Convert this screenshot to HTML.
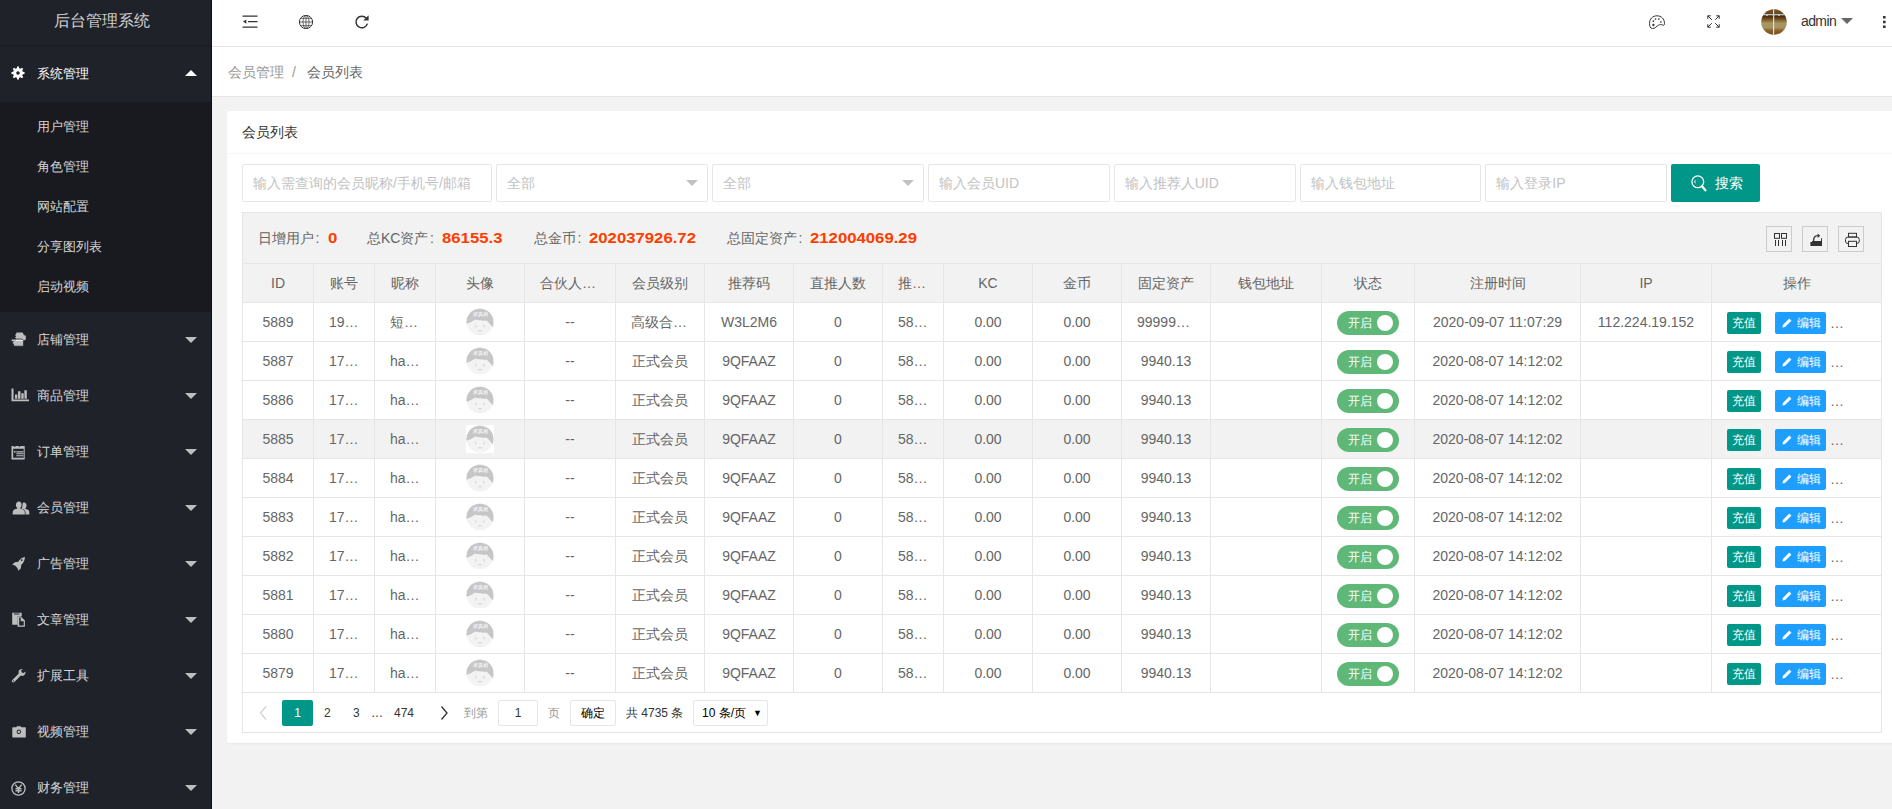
<!DOCTYPE html>
<html><head><meta charset="utf-8">
<style>
*{box-sizing:border-box;margin:0;padding:0}
html,body{width:1892px;height:809px;overflow:hidden;background:#f2f2f2;font-family:"Liberation Sans",sans-serif;font-size:14px;color:#666;font-weight:500}
.side{position:absolute;left:0;top:0;width:212px;height:809px;background:#20222a;overflow:hidden}
.side:after{content:"";position:absolute;right:0;top:0;width:1px;height:809px;background:#0f1014}
.logo{position:absolute;left:0;top:0;width:211px;height:45px;line-height:42px;font-size:16px;color:rgba(255,255,255,.8);text-align:center;padding-right:8px;box-shadow:0 1px 1px rgba(0,0,0,.2)}
.mi{position:absolute;left:0;width:211px;height:56px;line-height:56px;color:rgba(255,255,255,.82);font-size:13px}
.mi .t{position:absolute;left:37px;top:0}
.mi svg{position:absolute}
.mi .car{position:absolute;left:185px;top:25px;width:0;height:0;border-left:6px solid transparent;border-right:6px solid transparent;border-top:6px solid rgba(255,255,255,.7)}
.mi.open{color:#fff}
.mi.open .car{border-top:0;border-bottom:6px solid #fff;top:24px}
.sub{position:absolute;left:0;top:102px;width:211px;height:210px;background:#191a1f}
.sub div{position:absolute;left:37px;height:40px;line-height:40px;color:rgba(255,255,255,.82);font-size:13px}

.hdr{position:absolute;left:212px;top:0;width:1680px;height:47px;background:#fff;border-bottom:1px solid #e6e6e6}
.hdr svg{position:absolute}
.bc{position:absolute;left:212px;top:47px;width:1680px;height:50px;background:#fff;border-bottom:1px solid #e6e6e6;font-size:14px;line-height:50px}
.bc .a{position:absolute;left:16px;top:0;color:#999}
.bc .s{position:absolute;left:80px;top:0;color:#999}
.bc .c{position:absolute;left:95px;top:0;color:#666}
.card{position:absolute;left:227px;top:111px;width:1680px;height:632px;background:#fff;border-radius:2px;box-shadow:0 1px 2px 0 rgba(0,0,0,.05)}
.ch{position:absolute;left:0;top:0;width:100%;height:43px;border-bottom:1px solid #f6f6f6;line-height:42px;padding-left:15px;color:#333;font-size:14px}
.inp{position:absolute;top:53px;height:38px;border:1px solid #e6e6e6;border-radius:2px;background:#fff;line-height:36px;padding-left:10px;color:#c2c2c2;font-size:14px;white-space:nowrap;overflow:hidden}
.inp .arr{position:absolute;right:9px;top:15px;width:0;height:0;border-left:6px solid transparent;border-right:6px solid transparent;border-top:6px solid #c2c2c2}
.btn{position:absolute;top:53px;left:1444px;width:89px;height:38px;background:#009688;border-radius:2px;color:#fff;line-height:38px;font-size:14px}
.tv{position:absolute;left:15px;top:101px;width:1640px;height:521px;border:1px solid #e6e6e6;background:#fff}
.tool{position:absolute;left:0;top:0;width:1638px;height:51px;border-bottom:1px solid #e6e6e6;background:#f2f2f2;line-height:50px;padding-left:15px;color:#666;font-size:14px;white-space:nowrap}
.tool b{color:#ff3c00;font-weight:bold;font-size:15px}
.ti{position:absolute;top:13px;width:26px;height:26px;border:1px solid #ccc;background:#f2f2f2}
.ti svg{position:absolute;left:5px;top:5px}
.row{position:absolute;left:0;width:1638px;height:39px;border-bottom:1px solid #e6e6e6;display:flex;background:#fff}
.row.th{background:#f2f2f2}
.row.hov{background:#f2f2f2}
.row>div{height:38px;border-right:1px solid #e6e6e6;text-align:center;line-height:38px;color:#666;font-size:14px;white-space:nowrap;overflow:hidden;position:relative}
.row>div:last-child{border-right:0}
.sw{display:inline-block;position:relative;width:62px;height:24px;border-radius:12px;background:#5fb878;vertical-align:middle;margin-top:-1px;color:#fff;font-size:12px;line-height:24px;text-align:left;padding-left:11px}
.sw:after{content:"";position:absolute;left:40px;top:4px;width:16px;height:16px;border-radius:50%;background:#fff}
.av{display:inline-block;width:28px;height:28px;vertical-align:middle;margin-top:-3px}
.ops{position:absolute;left:15px;top:9px;height:22px;white-space:nowrap}
.bx{position:absolute;top:0;height:22px;line-height:22px;border-radius:2px;color:#fff;font-size:12px;text-align:center}
.pg{position:absolute;left:0;top:480px;width:1638px;height:39px;font-size:12px;color:#333}
.pg>*{position:absolute}
.tool .lab{position:absolute;top:0;line-height:50px;color:#666}
.tool b{position:absolute;top:0;line-height:50px;color:#ff3d00;font-weight:bold;font-size:15px;display:inline-block;transform:scaleX(1.115);transform-origin:0 50%}


.col{display:inline-block;width:14px;padding-left:1.5px;font-style:normal}

</style></head><body>
<svg width="0" height="0" style="position:absolute"><defs><symbol id="avatar" viewBox="0 0 28 28"><rect width="28" height="28" fill="#fff"/><circle cx="14" cy="14" r="13.5" fill="#f3f3f3"/><path fill="#c6c6c6" d="M.55 15.8A13.5 13.5 0 1 1 27.45 14.2c.1 1.7-.1 3.4-.5 4.8-2-1.8-4-4.3-6.2-6.6-2.3.5-4.5.3-6.6-.2-2 .3-3.6-.2-5.2-.6C6 13.6 3.4 15.2.55 15.8z"/><text x="14" y="7.6" font-size="5.4" font-weight="bold" fill="#f7f7f7" fill-opacity=".85" text-anchor="middle" font-family="Liberation Sans">求真相</text><path fill="#f0f0f0" d="M8 13.2l1.5-1.4 1.5 1.4h-1v1.3h-1v-1.3z"/><path fill="#d8d8d8" d="M9.2 16.8h1.2v2.6H9.2z M17.4 16.8h1.2v2.6h-1.2z M11.6 22.3h4.8c-.4.9-1.2 1.3-2.4 1.3s-2-.4-2.4-1.3z"/></symbol></defs></svg><div class="side">
<div class="logo">后台管理系统</div>
<div class="mi open" style="top:46px"><svg style="left:11px;top:20px" width="14" height="14" viewBox="0 0 14 14"><path fill="#fff" fill-rule="evenodd" d="M11.76 5.86 L13.54 6.12 L13.54 7.88 L11.76 8.14 L11.18 9.56 L12.25 11.00 L11.00 12.25 L9.56 11.18 L8.14 11.76 L7.88 13.54 L6.12 13.54 L5.86 11.76 L4.44 11.18 L3.00 12.25 L1.75 11.00 L2.82 9.56 L2.24 8.14 L0.46 7.88 L0.46 6.12 L2.24 5.86 L2.82 4.44 L1.75 3.00 L3.00 1.75 L4.44 2.82 L5.86 2.24 L6.12 0.46 L7.88 0.46 L8.14 2.24 L9.56 2.82 L11.00 1.75 L12.25 3.00 L11.18 4.44Z M7 5.2a1.8 1.8 0 1 0 0 3.6a1.8 1.8 0 1 0 0-3.6z"/></svg><span class="t">系统管理</span><span class="car"></span></div>
<div class="sub">
<div style="top:5px">用户管理</div>
<div style="top:45px">角色管理</div>
<div style="top:85px">网站配置</div>
<div style="top:125px">分享图列表</div>
<div style="top:165px">启动视频</div>
</div>
<div class="mi" style="top:312px"><svg style="left:11px;top:20px" width="16" height="15" viewBox="0 0 16 15"><path fill="rgba(255,255,255,.7)" d="M6 0.5H10.5C11.5 0.5 12 1 12.3 1.8L13 3.5C13.8 3 14.8 3.4 14.8 4.4V7.5L12 9H6C5.3 9 4.8 8.5 4.8 7.9C4.8 7.4 5.1 7 5.5 6.9C4.7 6.8 4.2 6.3 4.2 5.6C4.2 5 4.6 4.5 5.2 4.4C4.6 4.2 4.3 3.7 4.3 3.1C4.3 2.5 4.8 2 5.4 2C5.2 1.8 5.1 1.5 5.1 1.3C5.1 .8 5.5 .5 6 .5Z"/><path fill="rgba(255,255,255,.7)" stroke="#20222a" stroke-width=".8" d="M1.3 7.1H9.8C11 7.1 12.6 7.8 12.6 9.4V14.2H3.8C3 14.2 2.4 13.7 2.4 13C2.4 12.6 2.6 12.3 2.9 12.1C2 12 1.4 11.5 1.4 10.8C1.4 10.2 1.8 9.7 2.4 9.6H1.3C.7 9.6 .1 9.1 .1 8.4C.1 7.7 .7 7.1 1.3 7.1Z"/></svg><span class="t">店铺管理</span><span class="car"></span></div>
<div class="mi" style="top:368px"><svg style="left:11px;top:20px" width="18" height="14" viewBox="0 0 18 14"><path fill="rgba(255,255,255,.7)" d="M0.5 0.5h2v11h15.5v1.8H0.5z M4 6.5h2.3v4.3H4z M7 3.3h2.5v7.5H7z M10.3 5.3h2.4v5.5h-2.4z M13.3 2.3h2.5v8.5h-2.3z"/></svg><span class="t">商品管理</span><span class="car"></span></div>
<div class="mi" style="top:424px"><svg style="left:11px;top:21px" width="15" height="15" viewBox="0 0 15 15"><path fill="rgba(255,255,255,.7)" fill-rule="evenodd" d="M0.5 1h2l1 .9 1.5-.9h2.5l1 .9 1.2-.9h4v13.5H0.5z M2.2 3.8v9h10.5v-9z M3 6h1.6v1.6H3z M5.3 6.2h7v1.2h-7z M5.3 8.2h7v1h-7z M5.3 10.2h7v1h-7z"/></svg><span class="t">订单管理</span><span class="car"></span></div>
<div class="mi" style="top:480px"><svg style="left:12px;top:21px" width="18" height="14" viewBox="0 0 18 14"><path fill="rgba(255,255,255,.7)" d="M7 .5c1.6 0 2.6 1.4 2.6 3.2 0 1.5-.6 2.8-1.5 3.3v.6c2.8.6 4.4 1.6 4.6 2.8l.2 3.1H.6l.2-3.1C1 9.2 2.6 8.2 5.4 7.6V7C4.5 6.5 3.9 5.2 3.9 3.7 3.9 1.9 5.3.5 7 .5z M12 1.5c1.5 0 2.5 1.3 2.5 2.9 0 1.3-.5 2.5-1.3 2.9v.5c2.4.5 3.8 1.4 4 2.5l.2 3.2h-3.8l-.2-2.8c-.2-1.5-1.6-2.6-3.9-3.3.7-.8 1-1.9 1-3.1.1-1.2 0-2 .5-2.5.3-.2.6-.3 1-.3z"/></svg><span class="t">会员管理</span><span class="car"></span></div>
<div class="mi" style="top:536px"><svg style="left:11px;top:20px" width="15" height="15" viewBox="0 0 15 15"><path fill="rgba(255,255,255,.7)" fill-rule="evenodd" d="M14 1c-.2 3.2-1.3 5.8-3.7 7.8l-.4 3.4-2.6 2.6-.9-2.8-2.4-2.4L1.2 8.7l2.6-2.5 3.4-.4C9 3.4 11 1.3 14 1z M10.8 3.2a.9.9 0 1 0 0 1.8.9.9 0 0 0 0-1.8z"/></svg><span class="t">广告管理</span><span class="car"></span></div>
<div class="mi" style="top:592px"><svg style="left:11px;top:20px" width="16" height="16" viewBox="0 0 16 16"><path fill="rgba(255,255,255,.7)" fill-rule="evenodd" d="M1.2 .8h9.5v3.5l-2.4 0-1.9 0v8.4H1.2z M3 1.5h5.5v.9H3z M6.6 4.4h3.2l4.1 4.1v6.3H6.6z M8.2 5.6v7.8h4.5V9.2h-3V5.6z"/></svg><span class="t">文章管理</span><span class="car"></span></div>
<div class="mi" style="top:648px"><svg style="left:11px;top:20px" width="15" height="15" viewBox="0 0 15 15"><path fill="rgba(255,255,255,.7)" fill-rule="evenodd" d="M11.8 1c-1.5-.4-3.3.3-4 1.8-.4.9-.4 1.9 0 2.8L1.3 11.9c-.6.6-.6 1.5 0 2.1s1.5.6 2.1 0L9.8 7.6c.9.4 2 .4 2.9-.1 1.4-.7 2.1-2.3 1.8-3.9l-1.8 1.5-2-.6-.5-2z M2.5 12.2a.6.6 0 1 0 0 1.2.6.6 0 0 0 0-1.2z"/></svg><span class="t">扩展工具</span><span class="car"></span></div>
<div class="mi" style="top:704px"><svg style="left:12px;top:22px" width="14" height="12" viewBox="0 0 14 12"><path fill="rgba(255,255,255,.7)" fill-rule="evenodd" d="M4.2 1.2l.7-.9h3.8l.7.9h3.8c.3 0 .6.3.6.6v9.1c0 .3-.3.6-.6.6H.9c-.3 0-.6-.3-.6-.6V1.8c0-.3.3-.6.6-.6z M6.8 3.6a2.2 2.2 0 1 0 0 4.4 2.2 2.2 0 0 0 0-4.4z M6.8 4.5a1.3 1.3 0 1 1 0 2.6 1.3 1.3 0 0 1 0-2.6z"/></svg><span class="t">视频管理</span><span class="car"></span></div>
<div class="mi" style="top:760px"><svg style="left:11px;top:21px" width="15" height="15" viewBox="0 0 15 15"><circle cx="7.5" cy="7.5" r="6.6" fill="none" stroke="rgba(255,255,255,.7)" stroke-width="1.3"/><path fill="none" stroke="rgba(255,255,255,.7)" stroke-width="1.4" d="M4.3 3.6l3.2 4 3.2-4 M7.5 7.6v4.3 M4.5 7.8h6 M4.5 9.8h6"/></svg><span class="t">财务管理</span><span class="car"></span></div>
</div><div class="hdr">
<svg style="left:30px;top:14px" width="16" height="15" viewBox="0 0 16 15"><path fill="#333" d="M0.5 1.5h15v1.2H0.5z M6 7h9.5v1.2H6z M0.5 12.6h15v1.2H0.5z M1 7.6l3.3-2.2v4.4z"/></svg>
<svg style="left:86px;top:14px" width="16" height="16" viewBox="0 0 16 16"><g fill="none" stroke="#333" stroke-width="1"><circle cx="8" cy="8" r="6.6"/></g><g fill="none" stroke="#444" stroke-width=".8"><ellipse cx="8" cy="8" rx="3" ry="6.6"/><path d="M8 1.4v13.2 M3 4.3h10 M1.8 8h12.4 M3 11.7h10"/></g></svg>
<svg style="left:142px;top:14px" width="16" height="16" viewBox="0 0 16 16"><path fill="none" stroke="#333" stroke-width="1.5" d="M13.4 9.6A5.8 5.8 0 1 1 12.3 4.3"/><path fill="#333" d="M14.6 1.2v5.4H9.2z"/></svg>
<svg style="left:1437px;top:15px" width="16" height="14" viewBox="0 0 16 14"><path fill="none" stroke="#333" stroke-width="1" d="M3.5 13.5C1.2 13.5.5 11 .5 8.5.5 4 3.5.8 8 .8s7.5 3.2 7.5 7.7c0 1.5-.7 2-1.7 1.6-1.3-.6-2.8-.7-4.3 0-2 1-3 3.4-6 3.4z"/><g fill="#333"><circle cx="6.5" cy="4" r=".85"/><circle cx="9.8" cy="4" r=".85"/><circle cx="4.4" cy="6.2" r=".85"/><circle cx="11.9" cy="7" r=".85"/><circle cx="4.4" cy="10" r="1.15"/></g></svg>
<svg style="left:1495px;top:15px" width="13" height="13" viewBox="0 0 13 13"><g fill="none" stroke="#333" stroke-width="1"><path d="M.8.8l4 4 M.8 3.8V.8h3 M12.2.8l-4 4 M9.2.8h3v3 M.8 12.2l4-4 M.8 9.2v3h3 M12.2 12.2l-4-4 M12.2 9.2v3h-3"/></g></svg>
<svg style="left:1549px;top:9px" width="26" height="26" viewBox="0 0 26 26"><defs><linearGradient id="ag" x1="0" y1="0" x2="0" y2="1"><stop offset="0" stop-color="#7a5428"/><stop offset=".2" stop-color="#6a4518"/><stop offset=".26" stop-color="#3e2208"/><stop offset=".4" stop-color="#7a5424"/><stop offset=".55" stop-color="#a8975f"/><stop offset=".72" stop-color="#a49462"/><stop offset=".82" stop-color="#8c6228"/><stop offset="1" stop-color="#7a4a14"/></linearGradient><clipPath id="ac"><circle cx="13" cy="13" r="12.8"/></clipPath></defs><g clip-path="url(#ac)"><rect width="26" height="26" fill="url(#ag)"/><path d="M12.6 0v26 M0 5.8h26" stroke="#dde8ee" stroke-width="1.1"/><g fill="#a8d4e6"><circle cx="12.6" cy="5.8" r="1.1"/><circle cx="6" cy="6.2" r=".9"/><circle cx="18" cy="6.2" r=".9"/><circle cx="12.6" cy="10.5" r=".8"/><circle cx="12.6" cy="16" r=".8"/><circle cx="12.6" cy="21" r=".8"/></g></g></svg>
<span style="position:absolute;left:1589px;top:0;line-height:42px;color:#333;font-size:14px;letter-spacing:-.6px">admin</span>
<span style="position:absolute;left:1629px;top:18px;width:0;height:0;border-left:6px solid transparent;border-right:6px solid transparent;border-top:6px solid #666"></span>
<svg style="left:1670px;top:15px" width="5" height="14" viewBox="0 0 5 14"><path fill="#333" d="M1 1h2.6v2.6H1z M1 5.7h2.6v2.6H1z M1 10.4h2.6V13H1z"/></svg>
</div><div class="bc"><span class="a">会员管理</span><span class="s">/</span><span class="c">会员列表</span></div><div class="card">
<div class="ch">会员列表</div>
<div class="inp" style="left:15px;width:250px">输入需查询的会员昵称/手机号/邮箱</div>
<div class="inp" style="left:269px;width:212px">全部<span class=arr></span></div>
<div class="inp" style="left:485px;width:212px">全部<span class=arr></span></div>
<div class="inp" style="left:701.0px;width:181.75px">输入会员UID</div>
<div class="inp" style="left:886.75px;width:181.75px">输入推荐人UID</div>
<div class="inp" style="left:1072.5px;width:181.75px">输入钱包地址</div>
<div class="inp" style="left:1258.25px;width:181.75px">输入登录IP</div>
<div class="btn"><svg style="position:absolute;left:20px;top:11px" width="16" height="17" viewBox="0 0 16 17"><circle cx="6.8" cy="6.8" r="5.9" fill="none" stroke="#fff" stroke-width="1.3"/><path d="M4.2 5.2a3.2 3.2 0 0 0 .1 3" fill="none" stroke="#fff" stroke-width="1"/><path d="M10.8 11l3.6 4.3" stroke="#fff" stroke-width="2.2" stroke-linecap="round"/></svg><span style="position:absolute;left:44px;top:0">搜索</span></div>
<div class="tv">
<div class="tool">
<span class="lab" style="left:15px">日增用户<i class=col>:</i></span><b style="left:85px">0</b>
<span class="lab" style="left:124px">总KC资产<i class=col>:</i></span><b style="left:199px">86155.3</b>
<span class="lab" style="left:291px">总金币<i class=col>:</i></span><b style="left:346px">202037926.72</b>
<span class="lab" style="left:484px">总固定资产<i class=col>:</i></span><b style="left:567px">212004069.29</b>
<div class="ti" style="left:1523px"><svg width="16" height="16" viewBox="0 0 16 16"><g fill="none" stroke="#333" stroke-width="1"><rect x="2.5" y="1.5" width="5" height="4.8"/><rect x="9.5" y="1.5" width="5" height="4.8"/><path d="M3.5 8v6 M6.5 8v6 M10.5 8v6 M13.5 8v6"/></g></svg></div>
<div class="ti" style="left:1559px"><svg width="16" height="16" viewBox="0 0 16 16"><path fill="#333" d="M2.3 10h11.7v4H2.5z"/><path fill="none" stroke="#333" stroke-width="1" d="M13.5 6.3V10 M4 9.5h9"/><path fill="none" stroke="#333" stroke-width="1.3" d="M5.6 9.2C5.4 6 6.6 3.6 9.8 3.6"/><path fill="#333" d="M9.6 1.4l2.6 2.3-2.6 2.2z"/></svg></div>
<div class="ti" style="left:1595px"><svg width="16" height="16" viewBox="0 0 16 16"><g fill="none" stroke="#333" stroke-width="1"><rect x="4.5" y="1.3" width="8" height="3.8"/><rect x="1.5" y="5" width="13.8" height="6.6" rx="2.6"/><rect x="4.5" y="9.3" width="8" height="5.2" fill="#f2f2f2"/></g></svg></div>
</div>
<div class="row th" style="top:51px"><div style="width:71px">ID</div><div style="width:61px">账号</div><div style="width:61px">昵称</div><div style="width:89px">头像</div><div style="width:91px;text-align:left;padding-left:15px">合伙人…</div><div style="width:89px">会员级别</div><div style="width:89px">推荐码</div><div style="width:89px">直推人数</div><div style="width:61px;text-align:left;padding-left:15px">推…</div><div style="width:89px">KC</div><div style="width:89px">金币</div><div style="width:89px">固定资产</div><div style="width:111px">钱包地址</div><div style="width:93px">状态</div><div style="width:166px">注册时间</div><div style="width:131px">IP</div><div style="width:169px">操作</div></div>
<div class="row " style="top:90px"><div style="width:71px">5889</div><div style="width:61px;text-align:left;padding-left:15px">19…</div><div style="width:61px;text-align:left;padding-left:15px">短…</div><div style="width:89px"><svg class="av" viewBox="0 0 28 28"><use href="#avatar"/></svg></div><div style="width:91px">--</div><div style="width:89px;text-align:left;padding-left:15px">高级合…</div><div style="width:89px">W3L2M6</div><div style="width:89px">0</div><div style="width:61px;text-align:left;padding-left:15px">58…</div><div style="width:89px">0.00</div><div style="width:89px">0.00</div><div style="width:89px;text-align:left;padding-left:15px">99999…</div><div style="width:111px"></div><div style="width:93px"><span class="sw">开启</span></div><div style="width:166px">2020-09-07 11:07:29</div><div style="width:131px">112.224.19.152</div><div style="width:169px"><div class="ops"><span class="bx" style="left:0;width:34px;background:#009688">充值</span><span class="bx" style="left:48px;width:51px;background:#1e9fff"><svg style="position:absolute;left:7px;top:6px" width="10" height="10" viewBox="0 0 10 10"><path fill="#fff" d="M7.3.6l2.1 2.1L3 9.1.5 9.5.9 7z"/></svg><span style="position:absolute;left:22px">编辑</span></span><span style="position:absolute;left:103px;top:0;line-height:22px;color:#666;font-size:14px">…</span></div></div></div>
<div class="row " style="top:129px"><div style="width:71px">5887</div><div style="width:61px;text-align:left;padding-left:15px">17…</div><div style="width:61px;text-align:left;padding-left:15px">ha…</div><div style="width:89px"><svg class="av" viewBox="0 0 28 28"><use href="#avatar"/></svg></div><div style="width:91px">--</div><div style="width:89px">正式会员</div><div style="width:89px">9QFAAZ</div><div style="width:89px">0</div><div style="width:61px;text-align:left;padding-left:15px">58…</div><div style="width:89px">0.00</div><div style="width:89px">0.00</div><div style="width:89px">9940.13</div><div style="width:111px"></div><div style="width:93px"><span class="sw">开启</span></div><div style="width:166px">2020-08-07 14:12:02</div><div style="width:131px"></div><div style="width:169px"><div class="ops"><span class="bx" style="left:0;width:34px;background:#009688">充值</span><span class="bx" style="left:48px;width:51px;background:#1e9fff"><svg style="position:absolute;left:7px;top:6px" width="10" height="10" viewBox="0 0 10 10"><path fill="#fff" d="M7.3.6l2.1 2.1L3 9.1.5 9.5.9 7z"/></svg><span style="position:absolute;left:22px">编辑</span></span><span style="position:absolute;left:103px;top:0;line-height:22px;color:#666;font-size:14px">…</span></div></div></div>
<div class="row " style="top:168px"><div style="width:71px">5886</div><div style="width:61px;text-align:left;padding-left:15px">17…</div><div style="width:61px;text-align:left;padding-left:15px">ha…</div><div style="width:89px"><svg class="av" viewBox="0 0 28 28"><use href="#avatar"/></svg></div><div style="width:91px">--</div><div style="width:89px">正式会员</div><div style="width:89px">9QFAAZ</div><div style="width:89px">0</div><div style="width:61px;text-align:left;padding-left:15px">58…</div><div style="width:89px">0.00</div><div style="width:89px">0.00</div><div style="width:89px">9940.13</div><div style="width:111px"></div><div style="width:93px"><span class="sw">开启</span></div><div style="width:166px">2020-08-07 14:12:02</div><div style="width:131px"></div><div style="width:169px"><div class="ops"><span class="bx" style="left:0;width:34px;background:#009688">充值</span><span class="bx" style="left:48px;width:51px;background:#1e9fff"><svg style="position:absolute;left:7px;top:6px" width="10" height="10" viewBox="0 0 10 10"><path fill="#fff" d="M7.3.6l2.1 2.1L3 9.1.5 9.5.9 7z"/></svg><span style="position:absolute;left:22px">编辑</span></span><span style="position:absolute;left:103px;top:0;line-height:22px;color:#666;font-size:14px">…</span></div></div></div>
<div class="row hov" style="top:207px"><div style="width:71px">5885</div><div style="width:61px;text-align:left;padding-left:15px">17…</div><div style="width:61px;text-align:left;padding-left:15px">ha…</div><div style="width:89px"><svg class="av" viewBox="0 0 28 28"><use href="#avatar"/></svg></div><div style="width:91px">--</div><div style="width:89px">正式会员</div><div style="width:89px">9QFAAZ</div><div style="width:89px">0</div><div style="width:61px;text-align:left;padding-left:15px">58…</div><div style="width:89px">0.00</div><div style="width:89px">0.00</div><div style="width:89px">9940.13</div><div style="width:111px"></div><div style="width:93px"><span class="sw">开启</span></div><div style="width:166px">2020-08-07 14:12:02</div><div style="width:131px"></div><div style="width:169px"><div class="ops"><span class="bx" style="left:0;width:34px;background:#009688">充值</span><span class="bx" style="left:48px;width:51px;background:#1e9fff"><svg style="position:absolute;left:7px;top:6px" width="10" height="10" viewBox="0 0 10 10"><path fill="#fff" d="M7.3.6l2.1 2.1L3 9.1.5 9.5.9 7z"/></svg><span style="position:absolute;left:22px">编辑</span></span><span style="position:absolute;left:103px;top:0;line-height:22px;color:#666;font-size:14px">…</span></div></div></div>
<div class="row " style="top:246px"><div style="width:71px">5884</div><div style="width:61px;text-align:left;padding-left:15px">17…</div><div style="width:61px;text-align:left;padding-left:15px">ha…</div><div style="width:89px"><svg class="av" viewBox="0 0 28 28"><use href="#avatar"/></svg></div><div style="width:91px">--</div><div style="width:89px">正式会员</div><div style="width:89px">9QFAAZ</div><div style="width:89px">0</div><div style="width:61px;text-align:left;padding-left:15px">58…</div><div style="width:89px">0.00</div><div style="width:89px">0.00</div><div style="width:89px">9940.13</div><div style="width:111px"></div><div style="width:93px"><span class="sw">开启</span></div><div style="width:166px">2020-08-07 14:12:02</div><div style="width:131px"></div><div style="width:169px"><div class="ops"><span class="bx" style="left:0;width:34px;background:#009688">充值</span><span class="bx" style="left:48px;width:51px;background:#1e9fff"><svg style="position:absolute;left:7px;top:6px" width="10" height="10" viewBox="0 0 10 10"><path fill="#fff" d="M7.3.6l2.1 2.1L3 9.1.5 9.5.9 7z"/></svg><span style="position:absolute;left:22px">编辑</span></span><span style="position:absolute;left:103px;top:0;line-height:22px;color:#666;font-size:14px">…</span></div></div></div>
<div class="row " style="top:285px"><div style="width:71px">5883</div><div style="width:61px;text-align:left;padding-left:15px">17…</div><div style="width:61px;text-align:left;padding-left:15px">ha…</div><div style="width:89px"><svg class="av" viewBox="0 0 28 28"><use href="#avatar"/></svg></div><div style="width:91px">--</div><div style="width:89px">正式会员</div><div style="width:89px">9QFAAZ</div><div style="width:89px">0</div><div style="width:61px;text-align:left;padding-left:15px">58…</div><div style="width:89px">0.00</div><div style="width:89px">0.00</div><div style="width:89px">9940.13</div><div style="width:111px"></div><div style="width:93px"><span class="sw">开启</span></div><div style="width:166px">2020-08-07 14:12:02</div><div style="width:131px"></div><div style="width:169px"><div class="ops"><span class="bx" style="left:0;width:34px;background:#009688">充值</span><span class="bx" style="left:48px;width:51px;background:#1e9fff"><svg style="position:absolute;left:7px;top:6px" width="10" height="10" viewBox="0 0 10 10"><path fill="#fff" d="M7.3.6l2.1 2.1L3 9.1.5 9.5.9 7z"/></svg><span style="position:absolute;left:22px">编辑</span></span><span style="position:absolute;left:103px;top:0;line-height:22px;color:#666;font-size:14px">…</span></div></div></div>
<div class="row " style="top:324px"><div style="width:71px">5882</div><div style="width:61px;text-align:left;padding-left:15px">17…</div><div style="width:61px;text-align:left;padding-left:15px">ha…</div><div style="width:89px"><svg class="av" viewBox="0 0 28 28"><use href="#avatar"/></svg></div><div style="width:91px">--</div><div style="width:89px">正式会员</div><div style="width:89px">9QFAAZ</div><div style="width:89px">0</div><div style="width:61px;text-align:left;padding-left:15px">58…</div><div style="width:89px">0.00</div><div style="width:89px">0.00</div><div style="width:89px">9940.13</div><div style="width:111px"></div><div style="width:93px"><span class="sw">开启</span></div><div style="width:166px">2020-08-07 14:12:02</div><div style="width:131px"></div><div style="width:169px"><div class="ops"><span class="bx" style="left:0;width:34px;background:#009688">充值</span><span class="bx" style="left:48px;width:51px;background:#1e9fff"><svg style="position:absolute;left:7px;top:6px" width="10" height="10" viewBox="0 0 10 10"><path fill="#fff" d="M7.3.6l2.1 2.1L3 9.1.5 9.5.9 7z"/></svg><span style="position:absolute;left:22px">编辑</span></span><span style="position:absolute;left:103px;top:0;line-height:22px;color:#666;font-size:14px">…</span></div></div></div>
<div class="row " style="top:363px"><div style="width:71px">5881</div><div style="width:61px;text-align:left;padding-left:15px">17…</div><div style="width:61px;text-align:left;padding-left:15px">ha…</div><div style="width:89px"><svg class="av" viewBox="0 0 28 28"><use href="#avatar"/></svg></div><div style="width:91px">--</div><div style="width:89px">正式会员</div><div style="width:89px">9QFAAZ</div><div style="width:89px">0</div><div style="width:61px;text-align:left;padding-left:15px">58…</div><div style="width:89px">0.00</div><div style="width:89px">0.00</div><div style="width:89px">9940.13</div><div style="width:111px"></div><div style="width:93px"><span class="sw">开启</span></div><div style="width:166px">2020-08-07 14:12:02</div><div style="width:131px"></div><div style="width:169px"><div class="ops"><span class="bx" style="left:0;width:34px;background:#009688">充值</span><span class="bx" style="left:48px;width:51px;background:#1e9fff"><svg style="position:absolute;left:7px;top:6px" width="10" height="10" viewBox="0 0 10 10"><path fill="#fff" d="M7.3.6l2.1 2.1L3 9.1.5 9.5.9 7z"/></svg><span style="position:absolute;left:22px">编辑</span></span><span style="position:absolute;left:103px;top:0;line-height:22px;color:#666;font-size:14px">…</span></div></div></div>
<div class="row " style="top:402px"><div style="width:71px">5880</div><div style="width:61px;text-align:left;padding-left:15px">17…</div><div style="width:61px;text-align:left;padding-left:15px">ha…</div><div style="width:89px"><svg class="av" viewBox="0 0 28 28"><use href="#avatar"/></svg></div><div style="width:91px">--</div><div style="width:89px">正式会员</div><div style="width:89px">9QFAAZ</div><div style="width:89px">0</div><div style="width:61px;text-align:left;padding-left:15px">58…</div><div style="width:89px">0.00</div><div style="width:89px">0.00</div><div style="width:89px">9940.13</div><div style="width:111px"></div><div style="width:93px"><span class="sw">开启</span></div><div style="width:166px">2020-08-07 14:12:02</div><div style="width:131px"></div><div style="width:169px"><div class="ops"><span class="bx" style="left:0;width:34px;background:#009688">充值</span><span class="bx" style="left:48px;width:51px;background:#1e9fff"><svg style="position:absolute;left:7px;top:6px" width="10" height="10" viewBox="0 0 10 10"><path fill="#fff" d="M7.3.6l2.1 2.1L3 9.1.5 9.5.9 7z"/></svg><span style="position:absolute;left:22px">编辑</span></span><span style="position:absolute;left:103px;top:0;line-height:22px;color:#666;font-size:14px">…</span></div></div></div>
<div class="row " style="top:441px"><div style="width:71px">5879</div><div style="width:61px;text-align:left;padding-left:15px">17…</div><div style="width:61px;text-align:left;padding-left:15px">ha…</div><div style="width:89px"><svg class="av" viewBox="0 0 28 28"><use href="#avatar"/></svg></div><div style="width:91px">--</div><div style="width:89px">正式会员</div><div style="width:89px">9QFAAZ</div><div style="width:89px">0</div><div style="width:61px;text-align:left;padding-left:15px">58…</div><div style="width:89px">0.00</div><div style="width:89px">0.00</div><div style="width:89px">9940.13</div><div style="width:111px"></div><div style="width:93px"><span class="sw">开启</span></div><div style="width:166px">2020-08-07 14:12:02</div><div style="width:131px"></div><div style="width:169px"><div class="ops"><span class="bx" style="left:0;width:34px;background:#009688">充值</span><span class="bx" style="left:48px;width:51px;background:#1e9fff"><svg style="position:absolute;left:7px;top:6px" width="10" height="10" viewBox="0 0 10 10"><path fill="#fff" d="M7.3.6l2.1 2.1L3 9.1.5 9.5.9 7z"/></svg><span style="position:absolute;left:22px">编辑</span></span><span style="position:absolute;left:103px;top:0;line-height:22px;color:#666;font-size:14px">…</span></div></div></div>
<div class="pg">
<span style="left:14px;top:7px"><svg width="12" height="26" viewBox="0 0 12 26"><path d="M9 6.5L3.5 13 9 19.5" fill="none" stroke="#d2d2d2" stroke-width="1.3"/></svg></span>
<span style="left:39px;top:7px;width:31px;height:26px;line-height:26px;background:#009688;color:#fff;text-align:center;border-radius:2px">1</span>
<span style="left:81px;top:7px;line-height:26px;color:#333">2</span>
<span style="left:110px;top:7px;line-height:26px;color:#333">3</span>
<span style="left:128px;top:7px;line-height:26px;color:#333">…</span>
<span style="left:151px;top:7px;line-height:26px;color:#333">474</span>
<span style="left:195px;top:7px"><svg width="12" height="26" viewBox="0 0 12 26"><path d="M3.5 6.5L9 13 3.5 19.5" fill="none" stroke="#333" stroke-width="1.3"/></svg></span>
<span style="left:221px;top:7px;line-height:26px;color:#999">到第</span>
<span style="left:255px;top:7px;width:40px;height:26px;line-height:24px;border:1px solid #e6e6e6;border-radius:2px;text-align:center;color:#333">1</span>
<span style="left:305px;top:7px;line-height:26px;color:#999">页</span>
<span style="left:327px;top:7px;width:46px;height:26px;line-height:25px;border:1px solid #e6e6e6;border-radius:2px;text-align:center;color:#000">确定</span>
<span style="left:383px;top:7px;line-height:26px;color:#333">共 4735 条</span>
<span style="left:450px;top:7px;width:75px;height:26px;line-height:25px;border:1px solid #e6e6e6;border-radius:2px;color:#000;padding-left:8px">10 条/页<span style="position:absolute;left:59px;top:0;font-size:9px">▼</span></span>
</div>
</div>
</div>
</body></html>
